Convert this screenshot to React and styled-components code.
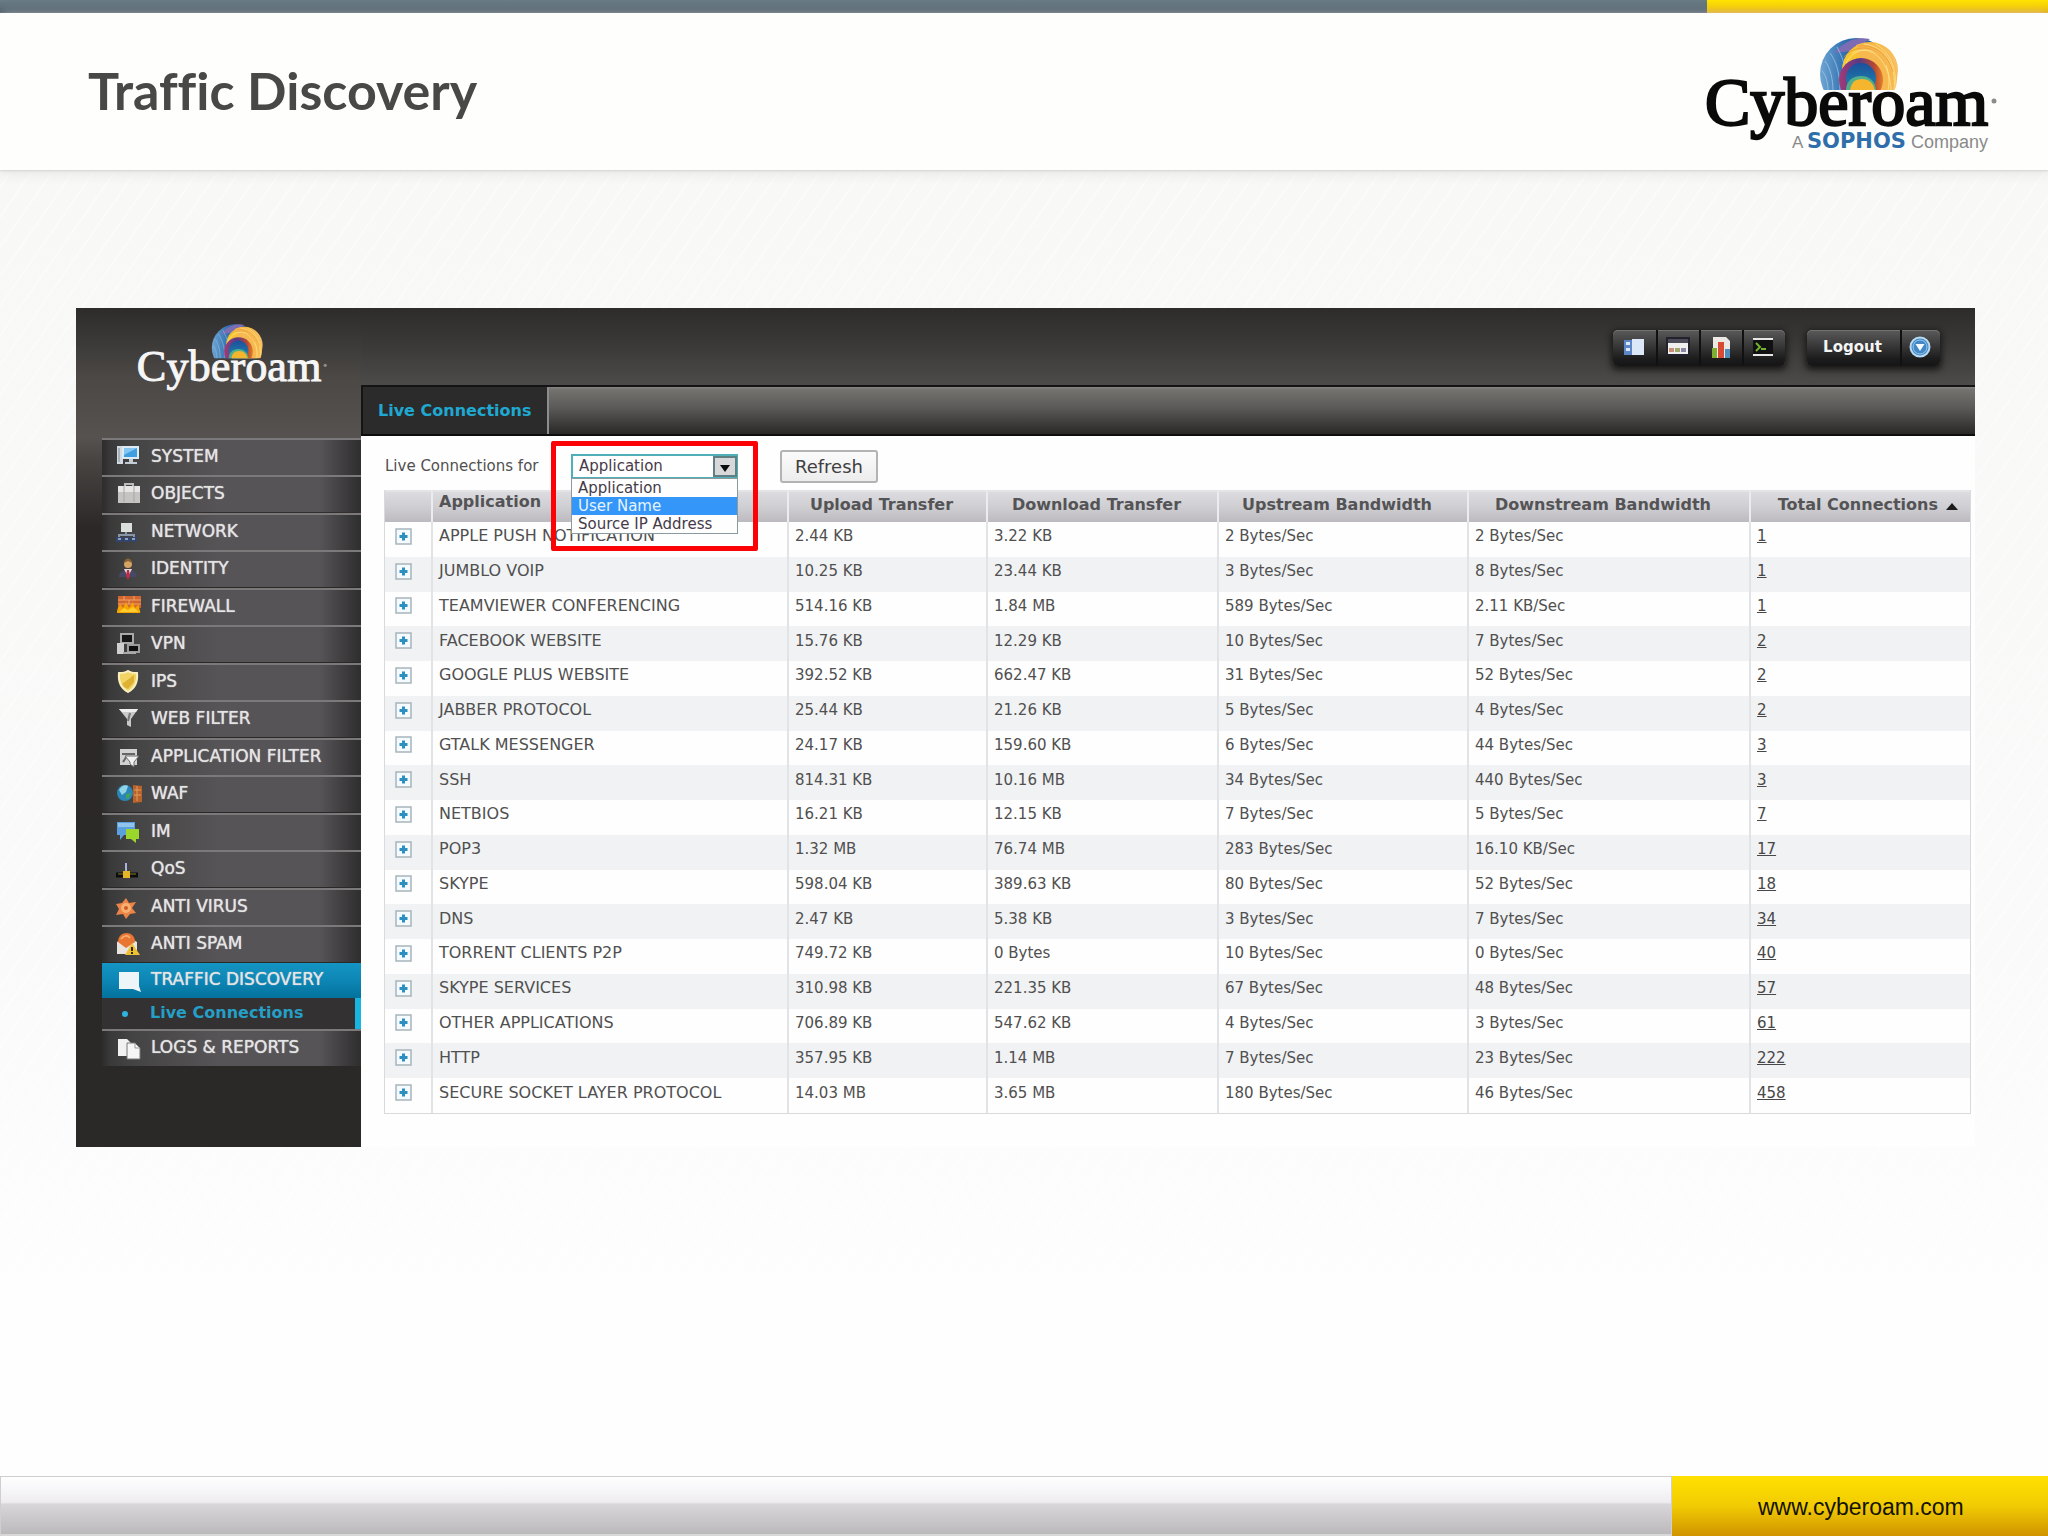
import React from "react";
import styled, { createGlobalStyle, css } from "styled-components";

const GlobalStyle = createGlobalStyle`
  *, *::before, *::after { box-sizing: border-box; }
  body {
    margin: 0;
    background: #fdfdfd;
    color: #505050;
    font-family: "DejaVu Sans", Verdana, sans-serif;
    font-size: 15px;
  }
  button, select { font-family: inherit; }
`;

const Slide = styled.div`
  display: flex;
  flex-direction: column;
  min-height: 100vh;
`;

const Split = styled.div`
  display: flex;
`;

const AccentBar = styled(Split)`
  height: 13px;
`;

const SlateStrip = styled.div`
  flex: 5;
  background: linear-gradient(#6a7c84, #5b6d77 50%, #42525f);
`;

const YellowStrip = styled.div`
  flex: 1;
  background: linear-gradient(#ffe500, #f2c800 60%, #e2a80c);
`;

const SlideHeader = styled.header`
  display: flex;
  justify-content: space-between;
  height: 157px;
  padding: 20px 52px 0 88px;
  background: #fefefd;
  box-shadow: 0 1px 2px #d4d4d4, 0 3px 12px #e4e4e4;
  position: relative;
`;

const Title = styled.h1`
  margin: 0;
  padding-top: 24px;
  color: #484846;
  font: 700 52px/66px Lato, "Open Sans", sans-serif;
  font-variant-ligatures: none;
`;

const Stage = styled.main`
  flex: 1;
  padding: 138px 73px 0 76px;
  background:
    repeating-linear-gradient(125deg, transparent 0 9px, #ffffff66 9px 11px, transparent 11px 17px),
    linear-gradient(#f8f8f7, #fafafa 60%, #fefefe 90%);
`;

const AppWindow = styled.section`
  display: grid;
  grid-template-columns: 285px 1fr;
  min-height: 838px;
  background: #fefefe;
`;

const Sidebar = styled.aside`
  padding: 13px 0 0 26px;
  background: linear-gradient(#2d2c2a, #4b4846 70px, #565250 130px, #484543 150px, #2b2827 220px, #2b2928);
`;

const BrandBox = styled.div`
  height: 117px;
  padding-left: 35px;
`;

const Menu = styled.ul`
  margin: 0;
  padding: 0;
  list-style: none;
`;

const MenuItem = styled.li`
  height: 37px;
  border-top: 2px solid #7b7979;
  &:nth-child(even) { height: 38px; }
  ${(p) => p.$active && css`
    && { height: 66px; border-top: 0; }
  `}
`;

const MenuLink = styled.a`
  display: flex;
  align-items: center;
  gap: 9px;
  height: 35px;
  padding: 0 0 3px 14px;
  color: #e4e4e4;
  font-size: 17px;
  text-decoration: none;
  text-shadow: 0 0 1px #e4e4e4;
  white-space: nowrap;
  background: ${(p) => p.$active
    ? "linear-gradient(#1495c3, #0d86b5 50%, #04729d)"
    : "linear-gradient(90deg, #2d2b2b, #3a3939 3%, #454444 12%, #565456 45%, #565456 84%, #313031 99%)"};
`;

const SubLink = styled.a`
  display: flex;
  align-items: center;
  height: 31px;
  padding: 0 0 3px 48px;
  border-right: 6px solid #18b5e2;
  background: #333131;
  color: #259fc6;
  font-size: 16px;
  font-weight: 700;
  text-decoration: none;
  &::before {
    content: "";
    width: 6px;
    height: 6px;
    margin: 4px 22px 0 -28px;
    border-radius: 50%;
    background: #2fb2dc;
  }
`;

const Workspace = styled.div`
  display: flex;
  flex-direction: column;
  min-width: 0;
`;

const TopBar = styled.div`
  display: flex;
  justify-content: flex-end;
  gap: 22px;
  height: 77px;
  padding: 22px 35px 0 0;
  background: linear-gradient(#2d2c2a, #3b3a38 50%, #4c4b49);
`;

const ButtonGroup = styled.div`
  display: flex;
  height: 36px;
  border-radius: 5px;
  background: linear-gradient(#5a5a5a, #3b3b3b 40%, #1c1c1c 80%, #151515);
  box-shadow: 0 2px 6px 2px #1a1918, inset 0 1px 0 #727272;
`;

const BarButton = styled.button`
  display: flex;
  align-items: center;
  justify-content: center;
  width: ${(p) => (p.$wide ? 93 : p.$last ? 40 : 43)}px;
  padding: 0 2px 2px 0;
  border: 0;
  border-left: ${(p) => (p.$first ? "0" : "2px solid #111")};
  background: none;
  color: #f4f4f4;
  font-size: 15px;
  font-weight: 700;
`;

const TabBar = styled.nav`
  display: flex;
  height: 51px;
  border-top: 2px solid #151414;
  border-bottom: 2px solid #0d0d0d;
  background: linear-gradient(#868583, #73726f 6%, #5a5957 45%, #2a2827);
`;

const Tab = styled.a`
  display: flex;
  align-items: center;
  padding: 0 16px 0 15px;
  border-left: 2px solid #151414;
  border-right: 2px solid #8d8d8c;
  background: #2c2b2b;
  color: #1ea9d2;
  font-size: 16px;
  font-weight: 700;
  text-decoration: none;
`;

const Content = styled.div`
  padding: 0 6px 33px 23px;
`;

const Toolbar = styled.div`
  display: flex;
  align-items: center;
  height: 54px;
  padding: 6px 0 0 1px;
`;

const FieldLabel = styled.label`
  width: 186px;
`;

const Picker = styled.div`
  position: relative;
  width: 167px;
  margin-right: 42px;
`;

const PickerSelect = styled.select`
  display: block;
  appearance: none;
  width: 100%;
  height: 25px;
  padding: 0 30px 0 6px;
  border: 2px solid #4fb0b9;
  border-radius: 0;
  background: #fff;
  color: #493a48;
  font-size: 15px;
`;

const PickerArrow = styled.span`
  position: absolute;
  top: 2px;
  right: 1px;
  display: flex;
  align-items: center;
  justify-content: center;
  width: 24px;
  height: 21px;
  padding-top: 4px;
  border: 2px solid #5f7f82;
  background: #d8d8da;
  pointer-events: none;
`;

const OptionList = styled.ul`
  position: absolute;
  z-index: 1;
  top: 24px;
  left: 0;
  width: 100%;
  margin: 0;
  padding: 0;
  border: 1px solid #8b9a9e;
  background: #fefefe;
  list-style: none;
`;

const Option = styled.li`
  height: 18px;
  padding-left: 6px;
  line-height: 18px;
  white-space: nowrap;
  color: ${(p) => (p.$highlighted ? "#e6f3ff" : "#453b48")};
  background: ${(p) => (p.$highlighted ? "#3396f8" : "transparent")};
`;

const Callout = styled.div`
  position: absolute;
  z-index: 2;
  top: -13px;
  left: -20px;
  right: -20px;
  height: 110px;
  border: 5px solid #fb0207;
  border-radius: 2px;
  pointer-events: none;
`;

const RefreshButton = styled.button`
  width: 98px;
  height: 33px;
  padding: 0;
  border: 2px solid #b3b3b3;
  border-radius: 3px;
  background: linear-gradient(#fbfbfb, #ececec);
  color: #404040;
  font-size: 18px;
`;

const DataTable = styled.table`
  width: 100%;
  height: 624px;
  table-layout: fixed;
  border-collapse: separate;
  border-spacing: 0;
  border: 1px solid #dadadd;
  border-top: 0;
`;

const Col = styled.col`
  width: ${(p) => p.$w}px;
`;

const HeadCell = styled.th`
  height: 31px;
  padding: 0 12px 4px 0;
  border-left: 2px solid #ececee;
  border-top: 2px solid #e4e4e7;
  background: linear-gradient(#dcdce0, #cfced2 50%, #bcbabe);
  color: #545456;
  font-size: 16px;
  line-height: 20px;
  text-align: ${(p) => p.$align || "center"};
  white-space: nowrap;
  ${(p) => p.$align === "left" && css`padding: 0 0 10px 6px;`}
  &:first-child { border-left: 0; }
`;

const SortMark = styled.svg`
  margin-left: 8px;
`;

const Row = styled.tr`
  background: #fefefe;
  &:nth-child(even) { background: #f0f2f4; }
`;

const Cell = styled.td`
  padding: 0 0 6px 6px;
  border-left: 2px solid #e2e3e6;
  color: #505050;
  font-size: ${(p) => (p.$name ? 16 : 15)}px;
  line-height: 20px;
  white-space: nowrap;
  &:first-child { border-left: 0; padding-left: 10px; }
`;

const CountLink = styled.a`
  color: #484848;
  text-decoration: underline;
`;

const Expand = styled.button`
  display: flex;
  width: 17px;
  height: 17px;
  padding: 0;
  border: 0;
  background: none;
`;

const Footer = styled.footer`
  display: flex;
  height: 60px;
`;

const FooterBar = styled.div`
  flex: 1;
  border: 1px solid #cfcfd1;
  border-bottom: 2px solid #d8d8d8;
  background: linear-gradient(#fefeff, #efedf0 44%, #d8d6d8 48%, #bbb9bb);
`;

const FooterSite = styled.div`
  display: flex;
  align-items: center;
  width: 376px;
  padding: 2px 0 0 86px;
  background: linear-gradient(#ffe100, #f1cb03 50%, #d09400);
`;

const SiteLink = styled.a`
  color: #141200;
  font: 23px/30px "Liberation Sans", Arial, sans-serif;
  text-decoration: none;
`;

function Swirl({ id }) {
  return (
    <g clipPath={`url(#${id}-cut)`}>
      <defs>
        <clipPath id={`${id}-cut`}><path d="M-3-4h86v57H-3z" /></clipPath>
        <linearGradient id={`${id}-blue`} x1="0" y1="0" x2="1" y2="0">
          <stop offset="0" stopColor="#6fa6d4" /><stop offset=".35" stopColor="#2f6fae" /><stop offset="1" stopColor="#275a9c" />
        </linearGradient>
        <linearGradient id={`${id}-gold`} x1="0" y1="0" x2="1" y2=".3">
          <stop offset="0" stopColor="#f6cf2c" /><stop offset=".5" stopColor="#f8b83a" /><stop offset="1" stopColor="#f7c069" />
        </linearGradient>
        <linearGradient id={`${id}-ring`} x1="0" y1="0" x2="1" y2="0">
          <stop offset="0" stopColor="#a33a78" /><stop offset=".45" stopColor="#583a86" /><stop offset=".8" stopColor="#b8472f" /><stop offset="1" stopColor="#e2822c" />
        </linearGradient>
        <linearGradient id={`${id}-core`} x1="0" y1="0" x2="0" y2="1">
          <stop offset="0" stopColor="#1c4f9c" /><stop offset="1" stopColor="#1f8fae" />
        </linearGradient>
      </defs>
      <circle cx="36" cy="37" r="36" fill={`url(#${id}-blue)`} />
      <path d="M14 16C24 4 36-1 50 2L32 14z" fill="#7b6cb4" />
      <circle cx="50" cy="33" r="28" fill={`url(#${id}-gold)`} />
      <path d="M36 8c18-8 40 8 41 32 0 6-1 10-3 14H52z" fill="#f8b850" />
      <g fill="none" strokeWidth="1">
        <path d="M5 24c5 6 8 18 8 30M10 16c6 8 10 20 10 38M2 34c4 4 6 12 6 20M17 10c4 8 6 12 7 18" stroke="#a9cbe7" opacity=".7" />
        <path d="M26 26c8-16 30-18 38-2 5 9 6 19 4 30M32 16c20-10 38 8 39 38M44 7c20 2 33 20 30 46M56 7c14 9 21 24 19 42" stroke="#fde58a" opacity=".8" />
        <path d="M24 20c12-14 34-12 42 8M38 9c16-2 30 8 35 26" stroke="#e8962c" opacity=".7" />
      </g>
      <circle cx="41" cy="43" r="22" fill={`url(#${id}-ring)`} />
      <circle cx="41" cy="41" r="15" fill={`url(#${id}-core)`} />
      <path d="M26 56c-1-10 5-17 15-17s16 8 15 17z" fill="#4fae8c" />
      <path d="M30 56c0-9 4-14 12-14s13 6 13 14z" fill="#f5b62d" />
    </g>
  );
}

const LogoSvg = styled.svg`
  display: block;
  overflow: visible;
`;

function Logo({ id, width, height, color, weight, tagline }) {
  return (
    <LogoSvg width={width} height={height} viewBox={`0 0 290 ${tagline ? 130 : 112}`} role="img" aria-label="Cyberoam">
      <g transform="translate(114 4)"><Swirl id={id} /></g>
      <text x="-1" y="92" fontFamily="'Liberation Serif', serif" fontSize="68" fill={color} stroke={color} strokeWidth={weight}>Cyberoam</text>
      <circle cx="288" cy="68" r="2.5" fill="#8c8c8c" />
      {tagline && (
        <g fontFamily="'Liberation Sans', sans-serif" fontSize="18" fill="#8a8a8a">
          <text x="86" y="115" fontSize="17">A</text>
          <text x="101" y="115" fontFamily="'DejaVu Sans', sans-serif" fontSize="21" fontWeight="700" fill="#2f6ea9">SOPHOS</text>
          <text x="205" y="115">Company</text>
        </g>
      )}
    </LogoSvg>
  );
}

const glyphs = {
  system: (<><path d="M1 3h6v18H1z" fill="#d3dbe2" /><path d="M3 5v14" stroke="#7b8894" /><path d="M6 3h17v13H6z" fill="#dcebf5" /><path d="M8 5h13v9H8z" fill="#3f9ee0" /><path d="M8 5h13L8 12z" fill="#85c7f3" /><path d="M13 16h4v3h4v2H9v-2h4z" fill="#c3ccd3" /></>),
  objects: (<><path d="M9 6V4h8v2" fill="none" stroke="#bbb" strokeWidth="2" /><path d="M2 6h22v17H2z" fill="#c6c4c2" /><path d="M2 6h22v6H2z" fill="#e7e6e4" /><path d="M8 6v16M18 6v16" stroke="#a8a6a4" /></>),
  network: (<><path d="M5 5h11v9H5z" fill="#dadfdc" /><path d="M10 14v3M3 19v-2h15v2" stroke="#8895a6" strokeWidth="2" fill="none" /><path d="M0 19h7v5H0zM8 19h6v5H8zM15 19h6v5h-6z" fill="#31456f" /><path d="M2 20h3v2H2zM9 20h3v2H9zM16 20h3v2h-3z" fill="#8ea2c8" /></>),
  identity: (<><circle cx="12" cy="9" r="4" fill="#d6a366" /><path d="M8 8c0-6 8-6 8 0l-4-2z" fill="#8b6132" /><path d="M3 22c0-5 4-7 9-7s9 2 9 7z" fill="#484766" /><path d="M8 14l4 8 4-8z" fill="#e6d8dc" /><path d="M11 15h2l1 6-2 4-2-4z" fill="#bc2c46" /></>),
  firewall: (<><path d="M2 3h23v12H2z" fill="#d1672f" /><path d="M2 7h23M2 11h23M8 3v4M18 3v4M13 7v4" stroke="#efa36a" /><path d="M1 20c0-5 2-6 3-9l3 4 3-6 3 6 4-6 2 6 4-4c-1 4 2 6 1 9z" fill="#f6a400" /><path d="M3 19l5-4 4 2 5-3 6 5z" fill="#ffcb2d" /></>),
  vpn: (<><path d="M5 4h12v9H5z" fill="#161616" stroke="#a9a9a9" strokeWidth="2" /><path d="M1 13h7v11H1z" fill="#cfcfcf" /><path d="M12 15h11v7H12z" fill="#101010" stroke="#9d9d9d" strokeWidth="2" /><path d="M7 23h13" stroke="#aaa" strokeWidth="2" /></>),
  ips: (<><path d="M12 3c3 2 6 2 9 2 1 9-2 15-9 19C5 20 2 14 3 5c3 0 6 0 9-2z" fill="#f2d464" stroke="#faf0bf" strokeWidth="2" /><path d="M6 16L18 7v7l-6 7c-3-1-5-3-6-5z" fill="#ddb234" /></>),
  web: (<><path d="M3 4h19l-7 10v8l-4-2v-6z" fill="#c9c9c9" /><path d="M3 4h19l-2 3H6z" fill="#eee" /><path d="M14 8l-2 8" stroke="#777" strokeWidth="2" /></>),
  app: (<><path d="M4 6h17v16H4z" fill="#d2d2d2" /><path d="M6 11h13M7 19l4-6" stroke="#656565" strokeWidth="2" /><path d="M9 13h14l-5 6v5l-4-3v-2z" fill="#f2f2f2" stroke="#6e6e6e" /></>),
  waf: (<><circle cx="9" cy="13" r="8" fill="#2a86b8" /><path d="M3 10c3-6 8-5 9-4l-2 6-4 3z" fill="#8fd3e4" /><path d="M10 14l5-1-2 5-3 1z" fill="#42a25a" /><path d="M17 5l9 1v16l-9 1z" fill="#b8622d" /><path d="M21 6v15M18 10h7M18 15h7" stroke="#e79a59" /></>),
  im: (<><path d="M1 4h18v13H8l-4 5v-5H1z" fill="#5ba0dc" /><path d="M2 5h16v4H2z" fill="#91c4ec" /><path d="M10 11h13v10h-3v4l-5-4h-5z" fill="#9bd62c" /></>),
  qos: (<><path d="M10 8v8" stroke="#a8b2da" strokeWidth="2" /><path d="M0 20h22" stroke="#0c0c0c" strokeWidth="5" /><path d="M2 19h6M14 19h6" stroke="#8a7c23" /><path d="M7 16h7v7H7z" fill="#e5b528" /></>),
  virus: (<><path d="M10 5l3 5 7-1-4 6 4 5-6 1-4 5-3-5-7 1 3-6-3-5 6-1z" fill="#ec8448" /><circle cx="10" cy="15" r="5" fill="#f8b070" /><circle cx="10" cy="15" r="2" fill="#cd5c2b" /></>),
  spam: (<><path d="M1 12L11 6l10 6v12H1z" fill="#e9e4de" /><path d="M2 12c0-12 17-12 17 0l-9 6z" fill="#e87532" /><path d="M5 9c3-4 7-4 9-1" stroke="#f7ab72" strokeWidth="2" fill="none" /><path d="M16 13l8 12H9z" fill="#efc02f" /><path d="M16 17v4M16 22v2" stroke="#332b08" strokeWidth="2" /></>),
  traffic: (<path d="M3 6h20v14l2 6-8-3H3z" fill="#eef5f9" />),
  logs: (<><path d="M2 5h9l4 4v13H2z" fill="#f1f1f1" /><path d="M11 9h8l5 5v11H11z" fill="#f5f5f5" stroke="#777" /><path d="M19 9v5h5" fill="none" stroke="#999" /></>),
};

const MenuIcon = ({ name }) => (
  <svg width="26" height="26" viewBox="0 0 26 26" aria-hidden="true">{glyphs[name]}</svg>
);

const barGlyphs = [
  ["Dashboard", <><path d="M2 4h8v15H2z" fill="#5c86c8" /><path d="M4 6h4v3H4zM4 12h4v3H4z" fill="#dbe8fa" /><path d="M10 3h12v16H10z" fill="#dce7f7" /></>],
  ["Wizard", <><path d="M1 2h22v17H1z" fill="#f0efed" stroke="#23212c" strokeWidth="2" /><path d="M2 3h20v4H2z" fill="#4d4b57" /><path d="M3 12h5v4H3z" fill="#c98f78" /><path d="M9 12h5v4H9z" fill="#a3a86b" /><path d="M15 12h5v4h-5z" fill="#8a86a8" /></>],
  ["Reports", <><path d="M4 1h13l4 4v17H4z" fill="#ece9e4" /><path d="M3 12h5v10H3z" fill="#7eae32" /><path d="M9 6h6v16H9z" fill="#d74b35" /><path d="M16 13h5v9h-5z" fill="#4f8dbd" /></>],
  ["Console", <><path d="M1 2h20v18H1z" fill="#111" /><path d="M1 2h20v2H1zM1 18h20v2H1z" fill="#e6e6e6" /><path d="M4 7l4 4-4 4M9 13h5" fill="none" stroke="#72b32f" strokeWidth="2" /></>],
];

const menu = [
  ["SYSTEM", "system"], ["OBJECTS", "objects"], ["NETWORK", "network"], ["IDENTITY", "identity"],
  ["FIREWALL", "firewall"], ["VPN", "vpn"], ["IPS", "ips"], ["WEB FILTER", "web"],
  ["APPLICATION FILTER", "app"], ["WAF", "waf"], ["IM", "im"], ["QoS", "qos"],
  ["ANTI VIRUS", "virus"], ["ANTI SPAM", "spam"], ["TRAFFIC DISCOVERY", "traffic", "Live Connections"],
  ["LOGS & REPORTS", "logs"],
];

const headings = ["Upload Transfer", "Download Transfer", "Upstream Bandwidth", "Downstream Bandwidth"];
const columnWidths = [46, 356, 199, 231, 250, 282, 221];

const connections = [
  ["APPLE PUSH NOTIFICATION", "2.44 KB", "3.22 KB", "2 Bytes/Sec", "2 Bytes/Sec", 1],
  ["JUMBLO VOIP", "10.25 KB", "23.44 KB", "3 Bytes/Sec", "8 Bytes/Sec", 1],
  ["TEAMVIEWER CONFERENCING", "514.16 KB", "1.84 MB", "589 Bytes/Sec", "2.11 KB/Sec", 1],
  ["FACEBOOK WEBSITE", "15.76 KB", "12.29 KB", "10 Bytes/Sec", "7 Bytes/Sec", 2],
  ["GOOGLE PLUS WEBSITE", "392.52 KB", "662.47 KB", "31 Bytes/Sec", "52 Bytes/Sec", 2],
  ["JABBER PROTOCOL", "25.44 KB", "21.26 KB", "5 Bytes/Sec", "4 Bytes/Sec", 2],
  ["GTALK MESSENGER", "24.17 KB", "159.60 KB", "6 Bytes/Sec", "44 Bytes/Sec", 3],
  ["SSH", "814.31 KB", "10.16 MB", "34 Bytes/Sec", "440 Bytes/Sec", 3],
  ["NETBIOS", "16.21 KB", "12.15 KB", "7 Bytes/Sec", "5 Bytes/Sec", 7],
  ["POP3", "1.32 MB", "76.74 MB", "283 Bytes/Sec", "16.10 KB/Sec", 17],
  ["SKYPE", "598.04 KB", "389.63 KB", "80 Bytes/Sec", "52 Bytes/Sec", 18],
  ["DNS", "2.47 KB", "5.38 KB", "3 Bytes/Sec", "7 Bytes/Sec", 34],
  ["TORRENT CLIENTS P2P", "749.72 KB", "0 Bytes", "10 Bytes/Sec", "0 Bytes/Sec", 40],
  ["SKYPE SERVICES", "310.98 KB", "221.35 KB", "67 Bytes/Sec", "48 Bytes/Sec", 57],
  ["OTHER APPLICATIONS", "706.89 KB", "547.62 KB", "4 Bytes/Sec", "3 Bytes/Sec", 61],
  ["HTTP", "357.95 KB", "1.14 MB", "7 Bytes/Sec", "23 Bytes/Sec", 222],
  ["SECURE SOCKET LAYER PROTOCOL", "14.03 MB", "3.65 MB", "180 Bytes/Sec", "46 Bytes/Sec", 458],
];

function ConnectionTable() {
  return (
    <DataTable>
      <colgroup>{columnWidths.map((w, i) => <Col key={i} $w={w} />)}</colgroup>
      <thead>
        <tr>
          <HeadCell aria-label="Expand" />
          <HeadCell $align="left" scope="col">Application</HeadCell>
          {headings.map((h) => <HeadCell key={h} scope="col">{h}</HeadCell>)}
          <HeadCell $align="right" scope="col" aria-sort="ascending">
            Total Connections
            <SortMark width="12" height="7" viewBox="0 0 12 7" aria-hidden="true"><path d="M0 7l6-7 6 7z" fill="#1c1c1c" /></SortMark>
          </HeadCell>
        </tr>
      </thead>
      <tbody>
        {connections.map(([name, ...values]) => {
          const total = values.pop();
          return (
            <Row key={name}>
              <Cell>
                <Expand type="button" aria-label={`Expand ${name}`}>
                  <svg width="17" height="17" viewBox="0 0 17 17" aria-hidden="true">
                    <path d="M1 1h15v15H1z" fill="#f4fafd" stroke="#a6b5bb" strokeWidth="1.5" />
                    <path d="M8.500 4.500v8M4.500 8.500h8" stroke="#2c8fc2" strokeWidth="3" />
                  </svg>
                </Expand>
              </Cell>
              <Cell $name>{name}</Cell>
              {values.map((v, i) => <Cell key={i}>{v}</Cell>)}
              <Cell><CountLink href="#connections">{total}</CountLink></Cell>
            </Row>
          );
        })}
      </tbody>
    </DataTable>
  );
}

export default function App() {
  return (
    <>
      <GlobalStyle />
      <Slide>
        <AccentBar><SlateStrip /><YellowStrip /></AccentBar>
        <SlideHeader>
          <Title>Traffic Discovery</Title>
          <Logo id="company" width={290} height={130} color="#0a0a0a" weight={2.4} tagline />
        </SlideHeader>
        <Stage>
          <AppWindow>
            <Sidebar>
              <BrandBox><Logo id="product" width={190} height={73} color="#f6f6f6" weight={1.5} /></BrandBox>
              <Menu>
                {menu.map(([label, icon, child]) => (
                  <MenuItem key={label} $active={!!child}>
                    <MenuLink href="#menu" $active={!!child}><MenuIcon name={icon} />{label}</MenuLink>
                    {child && <SubLink href="#live">{child}</SubLink>}
                  </MenuItem>
                ))}
              </Menu>
            </Sidebar>
            <Workspace>
              <TopBar>
                <ButtonGroup>
                  {barGlyphs.map(([label, art], i) => (
                    <BarButton key={label} type="button" aria-label={label} $first={i === 0}>
                      <svg width="24" height="22" viewBox="0 0 24 22" aria-hidden="true">{art}</svg>
                    </BarButton>
                  ))}
                </ButtonGroup>
                <ButtonGroup>
                  <BarButton type="button" $first $wide>Logout</BarButton>
                  <BarButton type="button" $last aria-label="More">
                    <svg width="22" height="22" viewBox="0 0 22 22" aria-hidden="true">
                      <circle cx="11" cy="11" r="9.500" fill="#4388c6" stroke="#b7d9f2" strokeWidth="2" />
                      <circle cx="11" cy="11" r="7" fill="none" stroke="#9cc6e8" />
                      <path d="M6.500 8h9L11 15z" fill="#f3faff" />
                    </svg>
                  </BarButton>
                </ButtonGroup>
              </TopBar>
              <TabBar><Tab href="#live">Live Connections</Tab></TabBar>
              <Content>
                <Toolbar>
                  <FieldLabel htmlFor="group-by">Live Connections for</FieldLabel>
                  <Picker>
                    <PickerSelect id="group-by" defaultValue="Application">
                      <option>Application</option>
                      <option>User Name</option>
                      <option>Source IP Address</option>
                    </PickerSelect>
                    <PickerArrow>
                      <svg width="10" height="7" viewBox="0 0 10 7" aria-hidden="true"><path d="M0 0h10L5 7z" fill="#0c0c0c" /></svg>
                    </PickerArrow>
                    <OptionList role="listbox" aria-label="Live Connections for">
                      <Option role="option">Application</Option>
                      <Option role="option" $highlighted aria-selected="true">User Name</Option>
                      <Option role="option">Source IP Address</Option>
                    </OptionList>
                    <Callout />
                  </Picker>
                  <RefreshButton type="button">Refresh</RefreshButton>
                </Toolbar>
                <ConnectionTable />
              </Content>
            </Workspace>
          </AppWindow>
        </Stage>
        <Footer>
          <FooterBar />
          <FooterSite><SiteLink href="#site">www.cyberoam.com</SiteLink></FooterSite>
        </Footer>
      </Slide>
    </>
  );
}
